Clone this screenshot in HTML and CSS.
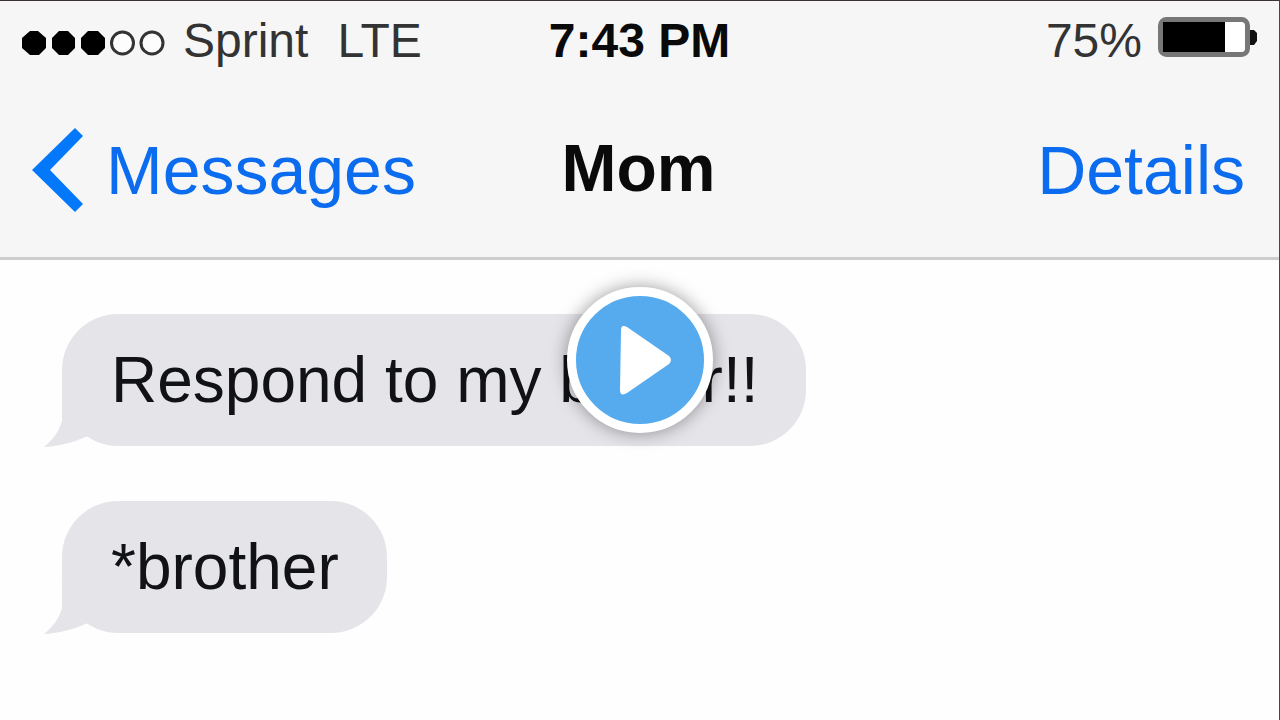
FILE: index.html
```html
<!DOCTYPE html>
<html lang="en">
<head>
<meta charset="utf-8">
<title>Mom</title>
<link rel="stylesheet" href="styles.css">
</head>
<body>
<main class="screen">
  <header class="header">
    <div class="status">
      <div class="status-left">
        <svg class="signal" width="144" height="26" viewBox="0 0 144 26" aria-hidden="true">
          <g fill="#000">
            <path d="M8 1h8l8 7v10l-7 7H8l-8-7V8z"/>
            <path d="M37 1h9l7 7v10l-7 7h-9l-7-7V8z"/>
            <path d="M66 1h10l7 7v10l-7 7H66l-7-7V8z"/>
          </g>
          <g fill="#fdfdfd" stroke="#333" stroke-width="3">
            <circle cx="100.500" cy="13" r="11"/>
            <circle cx="130" cy="13" r="11"/>
          </g>
        </svg>
        <span>Sprint</span>
        <span class="network">LTE</span>
      </div>
      <time class="clock">7:43 PM</time>
      <div class="status-right">
        <span>75%</span>
        <svg width="100" height="40" viewBox="0 0 100 40" aria-hidden="true">
          <rect x="3.500" y="2.500" width="87" height="35" rx="6" fill="#fff" stroke="#777" stroke-width="5"/>
          <rect x="6" y="5" width="62" height="30" fill="#000"/>
          <path d="M93 13h4l3 3v8l-3 4h-4z" fill="#111"/>
        </svg>
      </div>
    </div>
    <nav class="nav">
      <a class="link back" href="#messages">
        <svg width="52" height="84" viewBox="0 0 52 84" aria-hidden="true">
          <path d="M43 0l8 8-33 34 33 34-8 8L0 42z" fill="#0478fb"/>
        </svg>
        <span>Messages</span>
      </a>
      <h1 class="title">Mom</h1>
      <a class="link details" href="#details">Details</a>
    </nav>
  </header>
  <section class="thread">
    <div class="bubble">
      <svg class="tail" width="76" height="54" viewBox="0 0 76 54" aria-hidden="true">
        <path d="M18 0V28C15 38 10 46 0 54C18 53 34 48 48 41Q56 48 66 51L76 0z" fill="#e5e4e9"/>
      </svg>
      <p class="text">Respond to my boner!!</p>
    </div>
    <div class="bubble">
      <svg class="tail" width="76" height="54" viewBox="0 0 76 54" aria-hidden="true">
        <path d="M18 0V28C15 38 10 46 0 54C18 53 34 48 48 41Q56 48 66 51L76 0z" fill="#e5e4e9"/>
      </svg>
      <p class="text">*brother</p>
    </div>
  </section>
  <button class="play" type="button" aria-label="Play">
    <svg width="52" height="70" viewBox="0 0 52 70" aria-hidden="true">
      <path d="M1 5Q1-1 7 2L49 31Q53 35 49 39L7 68Q0 72 0 65z" fill="#fff"/>
    </svg>
  </button>
</main>
</body>
</html>
```
FILE: styles.css
```css
* {
  box-sizing: border-box;
}

body {
  margin: 0;
  font-family: "Liberation Sans", Arial, sans-serif;
  color: #111216;
}

.screen {
  position: relative;
  min-height: 100vh;
  background: #fefefe;
  border-top: 1px solid #3a3233;
  border-right: 1px solid #4a4646;
}

.header {
  padding: 12px 0 45px;
  background: #f6f6f6;
  border-bottom: 3px solid #cdcdcd;
}

.status,
.nav {
  display: grid;
  grid-template-columns: 1fr auto 1fr;
  align-items: center;
}

.status {
  padding: 0 22px;
  font-size: 48px;
  line-height: 56px;
  color: #333;
}

.status-left,
.status-right {
  display: flex;
  align-items: center;
}

.signal {
  margin: 4px 17px 0 0;
}

.network {
  margin-left: 29px;
}

.clock {
  font-weight: bold;
  color: #0a0a0a;
}

.status-right {
  justify-content: flex-end;
  gap: 15px;
}

.status-right svg {
  margin-bottom: 8px;
}

.nav {
  margin-top: 59px;
  padding: 0 34px 0 32px;
  font-size: 68px;
  line-height: 80px;
}

.link {
  color: #0b6cf0;
  text-decoration: none;
}

.back {
  display: flex;
  align-items: center;
  gap: 22px;
}

.details {
  justify-self: end;
}

.title {
  margin: 0;
  padding-bottom: 4px;
  font-size: 66px;
  line-height: 80px;
  color: #0a0a0a;
}

.thread {
  display: flex;
  flex-direction: column;
  align-items: flex-start;
  gap: 55px;
  padding: 54px 62px;
}

.bubble {
  position: relative;
  padding: 0 48px 0 49px;
  border-radius: 56px;
  background: #e5e4e9;
}

.tail {
  position: absolute;
  left: -18px;
  bottom: -1px;
}

.text {
  position: relative;
  margin: 0;
  font-size: 64px;
  line-height: 132px;
}

.play {
  position: absolute;
  top: calc(50% - 1px);
  left: 50%;
  display: flex;
  align-items: center;
  justify-content: center;
  width: 146px;
  height: 146px;
  padding: 0 0 0 12px;
  border: 9px solid #fff;
  border-radius: 50%;
  background: #55abee;
  box-shadow: 0 0 18px rgba(0, 0, 0, 0.4);
  transform: translate(-50%, -50%);
}
```
